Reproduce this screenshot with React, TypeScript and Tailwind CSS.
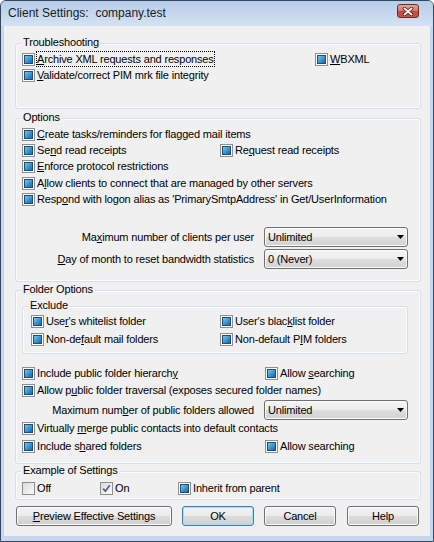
import type { ReactNode } from "react";

type BoxState = "mixed" | "off" | "on";

// "&" marks the access key that gets underlined
function Mnemonic({ text }: { text: string }) {
  const i = text.indexOf("&");
  if (i < 0) return <span>{text}</span>;
  return (
    <span>
      {text.slice(0, i)}
      <span className="underline">{text[i + 1]}</span>
      {text.slice(i + 2)}
    </span>
  );
}

function Box({ state }: { state: BoxState }) {
  if (state === "mixed") {
    return (
      <span className="flex size-[13px] shrink-0 items-center justify-center border border-[#8e8f8f] bg-[#fdfdfd]">
        <span className="size-[9px] border border-[#1f4d79] bg-linear-to-br from-[#6ccaf2] to-[#1a66ab]" />
      </span>
    );
  }
  return (
    <span className="flex size-[13px] shrink-0 items-center justify-center border border-[#8e8f8f] bg-linear-to-br from-[#dadada] to-[#fbfbfb]">
      {state === "on" && (
        <svg width="11" height="11" viewBox="0 0 11 11">
          <path d="M2.2 5.6 L4.4 8.2 L8.8 2.2" fill="none" stroke="#4c6188" strokeWidth="1.7" />
        </svg>
      )}
    </span>
  );
}

function Check({
  label,
  state = "mixed",
  focus = false,
}: {
  label: string;
  state?: BoxState;
  focus?: boolean;
}) {
  return (
    <div className="flex h-[16px] items-center">
      <Box state={state} />
      <span
        className={`ml-[1px] flex h-[16px] items-center whitespace-nowrap border ${
          focus ? "border-dotted border-black" : "border-transparent"
        }`}
      >
        <Mnemonic text={label} />
      </span>
    </div>
  );
}

function Group({
  title,
  className,
  children,
}: {
  title: string;
  className: string;
  children: ReactNode;
}) {
  return (
    <div className={`rounded-[3px] border border-[#d5dfe5] shadow-[inset_0_0_0_1px_#fafcfd] ${className}`}>
      <div className="-mt-[8px] ml-[5px] w-fit bg-[#f0f0f0] px-[2px] leading-[13px]">{title}</div>
      {children}
    </div>
  );
}

function SelectRow({ label, value, className }: { label: string; value: string; className: string }) {
  return (
    <div className={`flex items-center justify-end pr-[12px] ${className}`}>
      <span className="mr-[10px] whitespace-nowrap">
        <Mnemonic text={label} />
      </span>
      <div className="flex h-[20px] w-[144px] items-center justify-between rounded-[3px] border border-[#707070] bg-[linear-gradient(#f4f4f4,#ececec_50%,#dedede_50%,#d2d2d2)] pl-[3px] pr-[3px] shadow-[inset_0_0_0_1px_#fbfbfb]">
        <span>{value}</span>
        <svg width="7" height="4" viewBox="0 0 7 4">
          <polygon points="0,0 7,0 3.5,4" fill="#000" />
        </svg>
      </div>
    </div>
  );
}

function Button({ label, className, primary = false }: { label: string; className: string; primary?: boolean }) {
  return (
    <div
      className={`flex h-[20px] items-center justify-center whitespace-nowrap rounded-[3px] border bg-[linear-gradient(#f2f2f2,#ebebeb_50%,#dddddd_50%,#cfcfcf)] ${
        primary
          ? "border-[#3c7fb1] shadow-[inset_0_0_0_1px_#a8def6]"
          : "border-[#707070] shadow-[inset_0_0_0_1px_#fafafa]"
      } ${className}`}
    >
      <Mnemonic text={label} />
    </div>
  );
}

function CloseButton() {
  return (
    <div className="mt-[3px] flex h-[14px] w-[22px] items-center justify-center rounded-[3px] border border-[#6e2a24] bg-[linear-gradient(#e3a398,#d47c70_45%,#c24a3d_55%,#c5584a)]">
      <svg width="12" height="9" viewBox="0 0 12 9">
        <path d="M2.5 1.5 L9.5 7.5 M9.5 1.5 L2.5 7.5" stroke="#4d1a16" strokeWidth="3.6" strokeLinecap="round" />
        <path d="M2.5 1.5 L9.5 7.5 M9.5 1.5 L2.5 7.5" stroke="#f4f4f4" strokeWidth="2" strokeLinecap="round" />
      </svg>
    </div>
  );
}

export default function App() {
  return (
    <div className="h-[542px] w-[434px] font-['Liberation_Sans',Arial,sans-serif] text-[11px] leading-[13px] tracking-[-0.17px] text-black">
      <div className="flex h-full flex-col rounded-t-[6px] border border-[#34475e] bg-[#c6d8ef] pb-[5px]">
        <div className="flex h-[25px] shrink-0 items-start justify-between rounded-t-[5px] bg-linear-to-b from-[#b6cce8] to-[#d4e2f3] pl-[7px] pr-[14px]">
          <span className="mt-[5px] whitespace-pre text-[12px] leading-[15px] tracking-normal text-[#1b1b1b]">
            Client Settings:  company.test
          </span>
          <CloseButton />
        </div>

        <div className="mx-[3px] flex flex-1 flex-col bg-[#f0f0f0] pl-[11px] pr-[9px]">
          <Group title="Troubleshooting" className="mt-[17px] pb-[25px]">
            <div className="mt-[2px] flex pl-[6px]">
              <div className="w-[293px]">
                <Check label="&Archive XML requests and responses" focus />
              </div>
              <Check label="&WBXML" />
            </div>
            <div className="pl-[6px]">
              <Check label="&Validate/correct PIM mrk file integrity" />
            </div>
          </Group>

          <Group title="Options" className="mt-[9px] pb-[12px]">
            <div className="mt-[2px] pl-[6px]">
              <Check label="&Create tasks/reminders for flagged mail items" />
            </div>
            <div className="flex pl-[6px]">
              <div className="w-[198px]">
                <Check label="Se&nd read receipts" />
              </div>
              <Check label="Re&quest read receipts" />
            </div>
            <div className="pl-[6px]">
              <Check label="&Enforce protocol restrictions" />
            </div>
            <div className="mt-[1px] pl-[6px]">
              <Check label="A&llow clients to connect that are managed by other servers" />
            </div>
            <div className="pl-[6px]">
              <Check label="Resp&ond with logon alias as 'PrimarySmtpAddress' in Get/UserInformation" />
            </div>
            <SelectRow className="mt-[20px]" label="Ma&ximum number of clients per user" value="Unlimited" />
            <SelectRow className="mt-[2px]" label="&Day of month to reset bandwidth statistics" value="0 (Never)" />
          </Group>

          <Group title="Folder Options" className="mt-[8px] pb-[9px]">
            <Group title="Exclude" className="ml-[6px] mr-[12px] mt-[10px] pb-[6px]">
              <div className="mt-[1px] flex pl-[8px]">
                <div className="w-[189px]">
                  <Check label="Use&r's whitelist folder" />
                </div>
                <Check label="User's blac&klist folder" />
              </div>
              <div className="mt-[2px] flex pl-[8px]">
                <div className="w-[189px]">
                  <Check label="Non-de&fault mail folders" />
                </div>
                <Check label="Non-default P&IM folders" />
              </div>
            </Group>
            <div className="mt-[11px] flex pl-[6px]">
              <div className="w-[243px]">
                <Check label="Include public folder hierarch&y" />
              </div>
              <Check label="Allow &searching" />
            </div>
            <div className="mt-[1px] pl-[6px]">
              <Check label="Allow p&ublic folder traversal (exposes secured folder names)" />
            </div>
            <SelectRow className="mt-[2px]" label="Maximum num&ber of public folders allowed" value="Unlimited" />
            <div className="pl-[6px]">
              <Check label="Virtually &merge public contacts into default contacts" />
            </div>
            <div className="mt-[2px] flex pl-[6px]">
              <div className="w-[243px]">
                <Check label="Include s&hared folders" />
              </div>
              <Check label="Allow searching" />
            </div>
          </Group>

          <Group title="Example of Settings" className="mt-[7px] pb-[3px]">
            <div className="mt-[3px] flex pl-[6px]">
              <div className="w-[78px]">
                <Check label="Off" state="off" />
              </div>
              <div className="w-[78px]">
                <Check label="On" state="on" />
              </div>
              <Check label="Inherit from parent" />
            </div>
          </Group>

          <div className="mt-[6px] flex pl-[1px]">
            <Button label="&Preview Effective Settings" className="w-[156px]" />
            <Button label="OK" className="ml-[10px] w-[72px]" primary />
            <Button label="Cancel" className="ml-[10px] w-[72px]" />
            <Button label="Help" className="ml-[11px] w-[72px]" />
          </div>
        </div>
      </div>
    </div>
  );
}
